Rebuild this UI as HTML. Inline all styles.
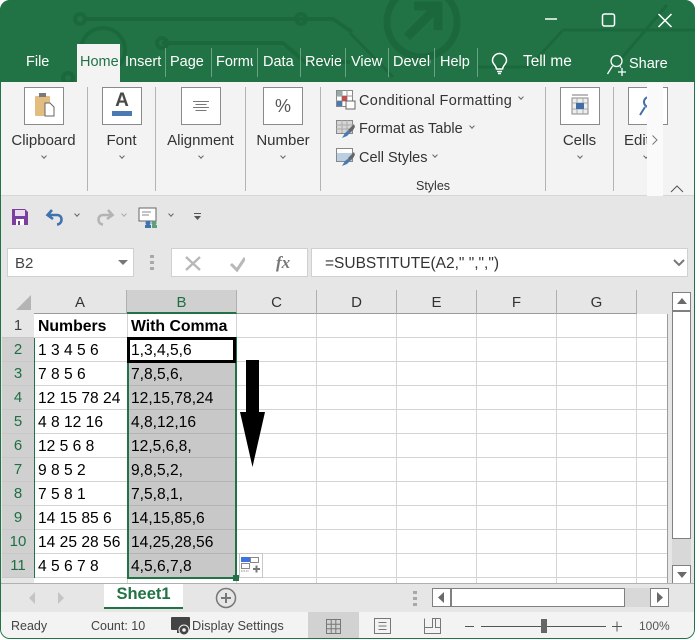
<!DOCTYPE html>
<html><head><meta charset="utf-8"><style>
html,body{margin:0;padding:0;background:#fff}
#w{position:relative;width:700px;height:640px;overflow:hidden;background:#fff;font-family:"Liberation Sans",sans-serif;color:#333}
#w div{position:absolute;box-sizing:border-box;white-space:nowrap}
.t{font-size:14.5px;line-height:18px}
.tab{color:#fff;top:53px;font-size:14.5px;line-height:18px}
.sep{top:48px;width:1px;height:29px;background:#6aa384}
.ib{top:87px;width:40px;height:38px;border:1px solid #8a8a8a;background:#fff}
.gl{top:87px;width:1px;height:104px;background:#b4b4b4}
.lab{top:132px;font-size:15px;line-height:18px;color:#333;text-align:center}
.ch{width:4px;height:4px;margin:1px 0 0 1px;border-right:1px solid #666;border-bottom:1px solid #666;transform:rotate(45deg)}
.hd{top:290px;height:24px;background:#e6e6e6;text-align:center;font-size:15px;line-height:26px;color:#333;border-right:1px solid #b0b0b0;border-bottom:1px solid #9c9c9c}
.rn{left:2px;width:32px;height:24px;background:#e6e6e6;text-align:center;font-size:15px;line-height:24px;color:#444;border-bottom:1px solid #c8c8c8}
.rs{background:#d0d0d0;color:#1f6e43}
.c{font-size:15.6px;line-height:26px;color:#000;height:24px}
.b{font-weight:bold;font-size:15.8px}
.gh{left:34px;width:634px;height:1px;background:#d4d4d4}
.gv{top:314px;width:1px;height:269px;background:#d4d4d4}
</style></head><body><div id="w">
<!-- frame -->
<div style="left:0;top:0;width:695px;height:639px;background:#e6e6e6;border:1.5px solid #217346;border-radius:10px;overflow:hidden"></div>
<!-- title -->
<div style="left:0;top:0;width:695px;height:82px;background:#217346;border-radius:10px 10px 0 0;overflow:hidden">
<svg width="695" height="82" style="position:absolute;left:0;top:0" fill="none" stroke="#1c683d" stroke-width="4">
<path d="M84 19H333L352 32M162 43H283L305 62H350"/><circle cx="80" cy="19" r="5"/><circle cx="301" cy="19" r="5"/><circle cx="162" cy="43" r="5"/><circle cx="68" cy="78" r="5"/>
<circle cx="103" cy="50" r="22"/>
<circle cx="422" cy="22" r="35" stroke-width="7"/><path d="M407 37L438 6M414 6H438V30" stroke-width="9"/>
<path d="M350 33L393 77M563 30H695M563 30L530 66M667 5L620 60" stroke-width="3"/><path d="M477 67H530" stroke-width="3"/>
</svg></div>
<div class="tab" style="left:26px">File</div>
<div style="left:77px;top:44px;width:43px;height:38px;background:#f3f3f3"></div>
<div class="tab" style="left:80px;width:38px;overflow:hidden;color:#217346">Home</div>
<div class="tab" style="left:125px">Insert</div><div class="sep" style="left:165px"></div>
<div class="tab" style="left:170px">Page</div><div class="sep" style="left:211px"></div>
<div class="tab" style="left:216px;width:37px;overflow:hidden">Formulas</div><div class="sep" style="left:257px"></div>
<div class="tab" style="left:263px">Data</div><div class="sep" style="left:300px"></div>
<div class="tab" style="left:305px;width:36px;overflow:hidden">Review</div><div class="sep" style="left:345px"></div>
<div class="tab" style="left:351px">View</div><div class="sep" style="left:388px"></div>
<div class="tab" style="left:393px;width:38px;overflow:hidden">Developer</div><div class="sep" style="left:434px"></div>
<div class="tab" style="left:440px">Help</div><div class="sep" style="left:477px"></div>
<svg style="position:absolute;left:490px;top:52px" width="20" height="24" fill="none" stroke="#fff" stroke-width="1.5"><path d="M6.5 17C6 13 2.5 12 2.5 8.500A7 7 0 0 1 16.500 8.500C16.500 12 13 13 12.500 17ZM7 19.500H12M8 21.500H11"/></svg>
<div class="tab" style="left:523px;font-size:15.4px">Tell me</div>
<svg style="position:absolute;left:606px;top:54px" width="22" height="22" fill="none" stroke="#fff" stroke-width="1.300"><circle cx="10.500" cy="7" r="5.500"/><path d="M1.500 20L6.500 12M14 12.500L15 13.500M12 18H20M16 14V22"/></svg>
<div class="tab" style="left:629px;top:55px">Share</div>
<svg style="position:absolute;left:540px;top:8px" width="150" height="26" fill="none" stroke="#fff" stroke-width="1.500"><path d="M5 11H17"/><rect x="62.500" y="6" width="12" height="12" rx="2"/><path d="M118.500 6L131.500 19M131.500 6L118.500 19"/></svg>
<!-- ribbon -->
<div style="left:1px;top:82px;width:693px;height:114px;background:#f3f3f3;border-bottom:1px solid #d6d6d6"></div>
<div class="ib" style="left:24px"><svg width="38" height="36" style="position:absolute;left:0;top:0"><rect x="10" y="8" width="15" height="20" rx="1" fill="#e3bd7f"/><rect x="14" y="5" width="7" height="4" fill="#7a7a7a"/><path d="M20 15H25L29 19V28H20Z" fill="#fff" stroke="#666"/></svg></div>
<div class="lab" style="left:0;width:87px">Clipboard</div><div class="ch" style="left:41px;top:153px"></div>
<div class="gl" style="left:87px"></div>
<div class="ib" style="left:102px"><div style="left:0;top:1px;width:38px;text-align:center;font-size:19px;font-weight:bold;line-height:24px;color:#4a4a4a">A</div><div style="left:9px;top:23px;width:20px;height:5px;background:#4a7ab0"></div></div>
<div class="lab" style="left:88px;width:67px">Font</div><div class="ch" style="left:119px;top:153px"></div>
<div class="gl" style="left:155px"></div>
<div class="ib" style="left:181px"><svg width="38" height="36" style="position:absolute;left:0;top:0" stroke="#777"><path d="M11 13.500H27M13.500 16.500H24.500M11 19.500H27M13.500 22.500H24.500"/></svg></div>
<div class="lab" style="left:156px;width:89px">Alignment</div><div class="ch" style="left:198px;top:153px"></div>
<div class="gl" style="left:245px"></div>
<div class="ib" style="left:263px"><div style="left:0;top:0;width:38px;text-align:center;font-size:18px;line-height:36px;color:#555">%</div></div>
<div class="lab" style="left:246px;width:74px">Number</div><div class="ch" style="left:280px;top:153px"></div>
<div class="gl" style="left:320px"></div>
<svg style="position:absolute;left:336px;top:90px" width="20" height="20"><rect x="0.500" y="0.500" width="16" height="16" fill="#fff" stroke="#888"/><path d="M0 6H17M0 11H17M6 0V17M11 0V17" stroke="#999"/><rect x="1" y="1" width="5" height="5" fill="#9aa"/><rect x="6" y="6" width="5" height="5" fill="#c0504d"/><rect x="1" y="11" width="5" height="5" fill="#4a7ab0"/><rect x="10" y="11" width="9" height="8" fill="#fff" stroke="#666"/></svg>
<svg style="position:absolute;left:336px;top:120px" width="20" height="19"><rect x="0.500" y="0.500" width="16" height="13" fill="#d6d6d6" stroke="#888"/><path d="M0 5H17M0 9H17M6 0V13M11 0V13" stroke="#aaa"/><path d="M18 6L9 13L6 18L11 16L18 9Z" fill="#4a7ab0"/><path d="M18 4L12 10L15 12L19 7Z" fill="#666"/></svg>
<svg style="position:absolute;left:336px;top:148px" width="20" height="19"><rect x="0.500" y="0.500" width="16" height="13" fill="#fff" stroke="#888"/><rect x="1" y="5" width="15" height="8" fill="#bccfe0"/><path d="M18 6L9 13L6 18L11 16L18 9Z" fill="#4a7ab0"/><path d="M18 4L12 10L15 12L19 7Z" fill="#666"/></svg>
<div class="t" style="left:359px;top:92px;letter-spacing:.33px">Conditional Formatting</div><div class="ch" style="left:518px;top:94px"></div>
<div class="t" style="left:359px;top:120px">Format as Table</div><div class="ch" style="left:469px;top:123px"></div>
<div class="t" style="left:359px;top:149px">Cell Styles</div><div class="ch" style="left:432px;top:152px"></div>
<div style="left:416px;top:179px;font-size:12.500px;line-height:15px;color:#333">Styles</div>
<div class="gl" style="left:545px"></div>
<div class="ib" style="left:560px"><svg width="38" height="36" style="position:absolute;left:0;top:0"><rect x="11" y="10" width="16" height="16" fill="#eee" stroke="#888"/><path d="M11 15H27M11 21H27M16 10V26M22 10V26" stroke="#aaa"/><rect x="15" y="15" width="8" height="6" fill="#3f6ea8"/><path d="M11 7H27" stroke="#777"/></svg></div>
<div class="lab" style="left:546px;width:67px">Cells</div><div class="ch" style="left:577px;top:153px"></div>
<div class="gl" style="left:613px"></div>
<div class="ib" style="left:628px"><svg width="20" height="36" style="position:absolute;left:0;top:0" fill="none" stroke="#3f6ea8" stroke-width="2"><circle cx="20" cy="14" r="5"/><path d="M16 19L11 27"/></svg></div>
<div class="lab" style="left:624px">Edit</div>
<div class="ch" style="left:643px;top:153px"></div>
<div style="left:647px;top:83px;width:16px;height:113px;background:#fafafa"></div>
<svg style="position:absolute;left:651px;top:134px" width="8" height="12" fill="none" stroke="#777"><path d="M1.500 1.500L6 6L1.500 10.500"/></svg>
<svg style="position:absolute;left:669px;top:184px" width="16" height="10" fill="none" stroke="#555"><path d="M2 8L8 2L14 8"/></svg>
<!-- QAT -->
<svg style="position:absolute;left:11px;top:208px" width="18" height="18"><path d="M1 1H14L17 4V17H1Z" fill="#7b3f9e"/><rect x="4" y="2" width="10" height="6" fill="#e8def0"/><rect x="5" y="11" width="8" height="6" fill="#fff"/><rect x="7" y="13" width="2" height="4" fill="#7b3f9e"/></svg>
<svg style="position:absolute;left:45px;top:208px" width="22" height="20" fill="none" stroke="#3f73ae" stroke-width="2.600"><path d="M7 2L2.500 7L8 11M3 7H12C18 7 18 16 12 16.500"/></svg>
<svg style="position:absolute;left:93px;top:208px" width="22" height="20" fill="none" stroke="#b4b4b4" stroke-width="2.600"><path d="M15 2L19.500 7L14 11M19 7H10C4 7 4 16 10 16.500"/></svg>
<div class="ch" style="left:74px;top:211px"></div><div class="ch" style="left:121px;top:211px;border-color:#aaa"></div><div class="ch" style="left:168px;top:211px"></div>
<svg style="position:absolute;left:138px;top:207px" width="22" height="22"><rect x="1" y="1" width="17" height="13" fill="#fff" stroke="#666"/><path d="M4 5H13M4 8H11" stroke="#888"/><circle cx="10" cy="16" r="2.500" fill="#3f73ae"/><circle cx="16" cy="16" r="2.500" fill="#5f9e7a"/><rect x="7" y="18" width="6" height="3" fill="#3f73ae"/><rect x="14" y="18" width="5" height="3" fill="#5f9e7a"/></svg>
<svg style="position:absolute;left:193px;top:212px" width="10" height="10"><path d="M1 1.500H8" stroke="#555"/><path d="M1 4H8L4.500 8Z" fill="#555"/></svg>
<!-- formula bar -->
<div style="left:7px;top:248px;width:127px;height:29px;background:#fff;border:1px solid #d0d0d0;font-size:15px;line-height:29px;padding-left:7px;color:#444">B2</div>
<svg style="position:absolute;left:117px;top:259px" width="12" height="8"><path d="M1 1H11L6 6Z" fill="#777"/></svg>
<svg style="position:absolute;left:150px;top:255px" width="5" height="18" fill="#a8a8a8"><rect x="0" y="0" width="4" height="3"/><rect x="0" y="6" width="4" height="3"/><rect x="0" y="12" width="4" height="3"/></svg>
<div style="left:171px;top:248px;width:137px;height:29px;background:#fff;border:1px solid #d0d0d0"></div>
<svg style="position:absolute;left:185px;top:255px" width="60" height="18" fill="none" stroke="#b8b8b8" stroke-width="2.400"><path d="M1 2L15 15M15 2L1 15"/><path d="M46 9L52 15L60 3" stroke-width="3"/></svg>
<div style="left:276px;top:250px;font-family:'Liberation Serif',serif;font-style:italic;font-weight:bold;font-size:17px;line-height:26px;color:#777">fx</div>
<div style="left:311px;top:248px;width:377px;height:29px;background:#fff;border:1px solid #d0d0d0;font-size:15.500px;line-height:29px;padding-left:13px;color:#333">=SUBSTITUTE(A2," ",",")</div>
<svg style="position:absolute;left:673px;top:259px" width="12" height="9" fill="none" stroke="#777" stroke-width="2"><path d="M1 1L6 6L11 1"/></svg>
<!-- sheet -->
<div style="left:34px;top:314px;width:634px;height:269px;background:#fff"></div>
<svg style="position:absolute;left:15px;top:294px" width="17" height="17"><path d="M16 1V16H1Z" fill="#b4b4b4"/></svg>
<div class="hd" style="left:34px;width:93px">A</div>
<div class="hd" style="left:127px;width:110px;background:#d0d0d0;color:#1f6e43;border-bottom:2px solid #217346">B</div>
<div class="hd" style="left:237px;width:80px">C</div>
<div class="hd" style="left:317px;width:80px">D</div>
<div class="hd" style="left:397px;width:80px">E</div>
<div class="hd" style="left:477px;width:80px">F</div>
<div class="hd" style="left:557px;width:80px">G</div>
<div class="gv" style="left:127px"></div><div class="gv" style="left:236px"></div><div class="gv" style="left:316px"></div><div class="gv" style="left:396px"></div><div class="gv" style="left:476px"></div><div class="gv" style="left:556px"></div><div class="gv" style="left:636px"></div>
<div class="gh" style="top:337px"></div><div class="gh" style="top:361px"></div><div class="gh" style="top:385px"></div><div class="gh" style="top:409px"></div><div class="gh" style="top:433px"></div><div class="gh" style="top:457px"></div><div class="gh" style="top:481px"></div><div class="gh" style="top:505px"></div><div class="gh" style="top:529px"></div><div class="gh" style="top:553px"></div><div class="gh" style="top:577px"></div>
<div style="left:667px;top:314px;width:1px;height:269px;background:#9c9c9c"></div>
<div class="rn" style="top:314px">1</div>
<div class="rn rs" style="top:338px">2</div><div class="rn rs" style="top:362px">3</div><div class="rn rs" style="top:386px">4</div><div class="rn rs" style="top:410px">5</div><div class="rn rs" style="top:434px">6</div><div class="rn rs" style="top:458px">7</div><div class="rn rs" style="top:482px">8</div><div class="rn rs" style="top:506px">9</div><div class="rn rs" style="top:530px">10</div><div class="rn rs" style="top:554px">11</div>
<div style="left:34px;top:338px;width:1px;height:240px;background:#217346"></div>
<div style="left:2px;top:578px;width:32px;height:5px;background:#e6e6e6"></div>
<!-- B selection -->
<div style="left:128px;top:338px;width:108px;height:240px;background:#c8c8c8"></div>
<div class="gh" style="left:128px;width:108px;top:385px;background:#b4b4b4"></div><div class="gh" style="left:128px;width:108px;top:409px;background:#b4b4b4"></div><div class="gh" style="left:128px;width:108px;top:433px;background:#b4b4b4"></div><div class="gh" style="left:128px;width:108px;top:457px;background:#b4b4b4"></div><div class="gh" style="left:128px;width:108px;top:481px;background:#b4b4b4"></div><div class="gh" style="left:128px;width:108px;top:505px;background:#b4b4b4"></div><div class="gh" style="left:128px;width:108px;top:529px;background:#b4b4b4"></div><div class="gh" style="left:128px;width:108px;top:553px;background:#b4b4b4"></div>
<div style="left:127px;top:337px;width:110px;height:242px;border:2px solid #217346"></div>
<div style="left:127px;top:337px;width:109px;height:26px;background:#fff;border:3px solid #000"></div>
<div style="left:233px;top:575px;width:6px;height:6px;background:#217346;border:0"></div>
<div class="c b" style="left:38px;top:314px">Numbers</div>
<div class="c b" style="left:131px;top:314px">With Comma</div>
<div class="c" style="left:38px;top:338px">1 3 4 5 6</div><div class="c" style="left:131px;top:338px">1,3,4,5,6</div>
<div class="c" style="left:38px;top:362px">7 8 5 6</div><div class="c" style="left:131px;top:362px">7,8,5,6,</div>
<div class="c" style="left:38px;top:386px">12 15 78 24</div><div class="c" style="left:131px;top:386px">12,15,78,24</div>
<div class="c" style="left:38px;top:410px">4 8 12 16</div><div class="c" style="left:131px;top:410px">4,8,12,16</div>
<div class="c" style="left:38px;top:434px">12 5 6 8</div><div class="c" style="left:131px;top:434px">12,5,6,8,</div>
<div class="c" style="left:38px;top:458px">9 8 5 2</div><div class="c" style="left:131px;top:458px">9,8,5,2,</div>
<div class="c" style="left:38px;top:482px">7 5 8 1</div><div class="c" style="left:131px;top:482px">7,5,8,1,</div>
<div class="c" style="left:38px;top:506px">14 15 85 6</div><div class="c" style="left:131px;top:506px">14,15,85,6</div>
<div class="c" style="left:38px;top:530px">14 25 28 56</div><div class="c" style="left:131px;top:530px">14,25,28,56</div>
<div class="c" style="left:38px;top:554px">4 5 6 7 8</div><div class="c" style="left:131px;top:554px">4,5,6,7,8</div>
<!-- arrow -->
<svg style="position:absolute;left:240px;top:360px" width="26" height="108"><path d="M6 0H19V52H25L12.500 107L0 52H6Z" fill="#000"/></svg>
<!-- paste options -->
<div style="left:239px;top:553px;width:24px;height:25px;background:#fff;border:1px solid #c8c8c8"></div>
<svg style="position:absolute;left:240px;top:556px" width="22" height="20"><rect x="1" y="1" width="9" height="5" fill="#3f73e0"/><rect x="10.500" y="1.500" width="8" height="5" fill="#fff" stroke="#888"/><rect x="1.500" y="7.500" width="8" height="5" fill="#fff" stroke="#888"/><path d="M1 15H9" stroke="#888" stroke-dasharray="1.500 1"/><path d="M13 13H20M16.500 9.500V16.500" stroke="#777" stroke-width="2"/></svg>
<!-- v scroll -->
<div style="left:672px;top:292px;width:19px;height:19px;background:#fff;border:1px solid #808080"></div>
<svg style="position:absolute;left:676px;top:298px" width="12" height="7"><path d="M6 0L11 6H1Z" fill="#6a6a6a"/></svg>
<div style="left:672px;top:311px;width:19px;height:254px;background:#d8d8d8"></div>
<div style="left:672px;top:311px;width:19px;height:228px;background:#fff;border:1px solid #808080"></div>
<div style="left:672px;top:565px;width:19px;height:19px;background:#fff;border:1px solid #808080"></div>
<svg style="position:absolute;left:676px;top:572px" width="12" height="7"><path d="M1 0H11L6 6Z" fill="#6a6a6a"/></svg>
<!-- tabs -->
<div style="left:1px;top:583px;width:693px;height:1px;background:#b0b0b0"></div>
<svg style="position:absolute;left:28px;top:592px" width="36" height="12" fill="#c4c4c4"><path d="M7 0V12L1 6Z"/><path d="M30 0V12L36 6Z"/></svg>
<div style="left:104px;top:584px;width:79px;height:25px;background:#fff;border-bottom:2px solid #217346;text-align:center;font-weight:bold;font-size:16.500px;line-height:21px;color:#217346">Sheet1</div>
<svg style="position:absolute;left:215px;top:587px" width="22" height="22" fill="none" stroke="#777" stroke-width="1.500"><circle cx="11" cy="11" r="9.500"/><path d="M6 11H16M11 6V16" stroke-width="2"/></svg>
<svg style="position:absolute;left:413px;top:591px" width="6" height="16" fill="#a8a8a8"><rect y="0" width="4" height="3"/><rect y="6" width="4" height="3"/><rect y="12" width="4" height="3"/></svg>
<div style="left:432px;top:588px;width:19px;height:19px;background:#fff;border:1px solid #808080"></div>
<svg style="position:absolute;left:438px;top:592px" width="7" height="12"><path d="M6 0V11L0 5.500Z" fill="#6a6a6a"/></svg>
<div style="left:451px;top:588px;width:174px;height:19px;background:#fff;border:1px solid #808080"></div>
<div style="left:625px;top:588px;width:25px;height:19px;background:#d8d8d8"></div>
<div style="left:650px;top:588px;width:19px;height:19px;background:#fff;border:1px solid #808080"></div>
<svg style="position:absolute;left:657px;top:592px" width="7" height="12"><path d="M0 0V11L6 5.500Z" fill="#6a6a6a"/></svg>
<!-- status -->
<div style="left:1px;top:612px;width:693px;height:26px;background:#f3f3f3;border-radius:0 0 9px 9px"></div>
<div style="left:11px;top:618px;font-size:12.500px;line-height:16px;color:#444">Ready</div>
<div style="left:91px;top:618px;font-size:12.500px;line-height:16px;color:#444">Count: 10</div>
<svg style="position:absolute;left:170px;top:616px" width="22" height="21"><rect x="1" y="1" width="19" height="13" rx="1" fill="#444"/><rect x="7" y="14" width="6" height="3" fill="#444"/><circle cx="14" cy="14" r="5" fill="#444" stroke="#f3f3f3"/><circle cx="14" cy="14" r="1.800" fill="#f3f3f3"/></svg>
<div style="left:192px;top:618px;font-size:12.800px;line-height:16px;color:#444">Display Settings</div>
<div style="left:308px;top:612px;width:51px;height:26px;background:#d2d2d2"></div>
<svg style="position:absolute;left:325px;top:618px" width="17" height="17" fill="none" stroke="#777"><path d="M1.500 1.500H15.500V15.500H1.500ZM1.500 6.200H15.500M1.500 10.800H15.500M6.200 1.500V15.500M10.800 1.500V15.500"/></svg>
<svg style="position:absolute;left:373px;top:618px" width="19" height="17" fill="none" stroke="#777"><path d="M1.500 0.500H17.500V15.500H1.500ZM5.500 4.500H13.500M5.500 8H13.500M5.500 11.500H13.500"/></svg>
<svg style="position:absolute;left:424px;top:618px" width="18" height="17" fill="none" stroke="#777"><path d="M0.500 0.500V15.500H16.500V0.500M0.500 9.500H8.500V0.500H16.500M11.500 0.500V9.500H16.500"/></svg>
<div style="left:465px;top:626px;width:9px;height:1px;background:#555"></div>
<div style="left:481px;top:626px;width:125px;height:1px;background:#555"></div>
<div style="left:541px;top:619px;width:6px;height:14px;background:#666"></div>
<svg style="position:absolute;left:612px;top:620px" width="11" height="13" stroke="#555"><path d="M0 6.500H10M5 1.500V11.500"/></svg>
<div style="left:639px;top:618px;font-size:12px;line-height:16px;color:#555">100%</div>
</div></body></html>
